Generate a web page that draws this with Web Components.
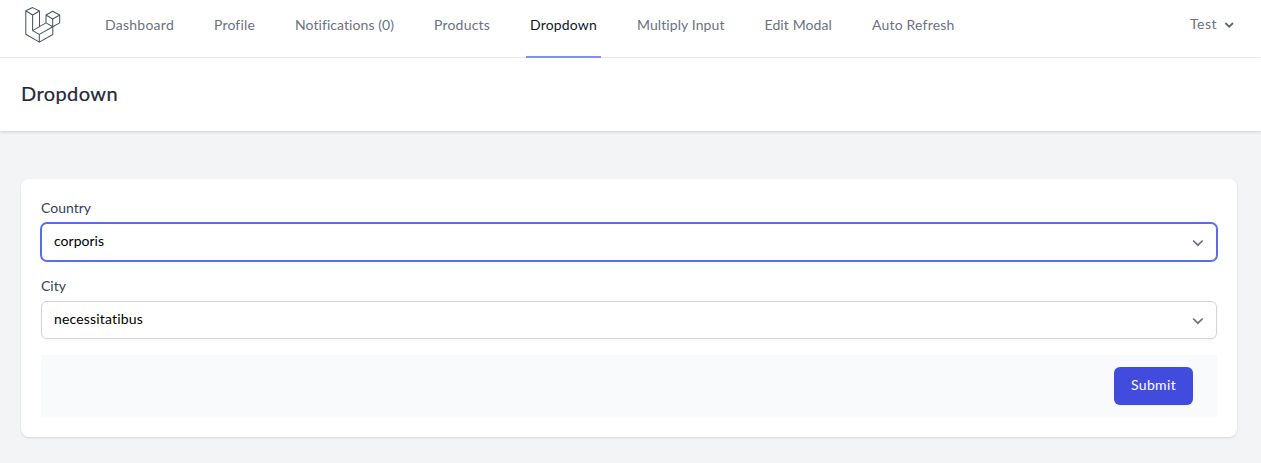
<!DOCTYPE html>
<html lang="en"><head><meta charset="utf-8"><title>Dropdown</title>
<style>html,body{margin:0;height:100%}body{background:#f3f4f6;font:14px/20px Lato,"Open Sans",sans-serif;overflow:hidden}</style></head>
<body><app-page></app-page>
<script>
const define=(name,html,setup)=>customElements.define(name,class extends HTMLElement{
  constructor(){super();this.attachShadow({mode:'open'}).innerHTML=html}
  connectedCallback(){if(setup)setup(this,this.shadowRoot)}
});
// A line of text whose tracking is adjusted to fill the width in "w".
define('fit-text','<style>:host{display:block;white-space:nowrap;font-kerning:normal;font-variant-ligatures:none}span{display:inline-block}</style><span></span>',(h,r)=>{
  const s=r.querySelector('span');s.textContent=h.getAttribute('text');
  const w=+h.getAttribute('w');h.style.width=w+'px';
  s.style.letterSpacing=((w-s.getBoundingClientRect().width)/s.textContent.length)+'px';
});
define('app-logo',`<style>:host{display:block;width:36px;height:37px}svg{display:block}</style>
<svg width="36" height="37" viewBox="25 7 36 37" fill="none" stroke="#4b5563" stroke-width="1.05" stroke-linejoin="round" stroke-linecap="round"><path d="M25.8 10.7 32.6 7.6 39.5 11 32.6 15ZM25.8 10.7V34.3L39.3 42.1 52.8 34.5V26.7L39.3 34.4 32.6 30.6V15M39.5 11V26.6M39.3 34.4V42.1M32.6 30.6 46 22.9 52.8 26.7M46 15 52.7 11.3 59.7 15 52.7 19ZM46 15V22.9M52.7 19V26.7M59.7 15V22.9L52.8 26.7"/></svg>`);
define('nav-link',`<style>:host{display:block;box-sizing:border-box;height:58px;padding:15px 4px 0;color:#6b7280;border-bottom:2px solid transparent}:host([active]){color:#111827;border-color:#7f8ff4}</style><slot></slot>`);
define('user-menu',`<style>:host{display:flex;align-items:center;gap:7px;height:20px;color:#6b7280;margin-top:14px}svg{display:block;margin-top:1px}</style><slot></slot>
<svg width="10" height="8" viewBox="0 0 10 8" fill="none" stroke="#5f6774" stroke-width="1.8"><path d="m1.4 2 3.8 3.7L9 2"/></svg>`);
define('app-nav',`<style>:host{display:flex;box-sizing:border-box;height:58px;background:#fff;border-bottom:1px solid #edeef0;padding:0 27px 0 25px;align-items:flex-start}app-logo{margin-top:7px}nav{display:flex;gap:32px;margin-left:40px}user-menu{margin-left:auto}</style>
<app-logo></app-logo><nav>
<nav-link><fit-text text="Dashboard" w="69"></fit-text></nav-link>
<nav-link><fit-text text="Profile" w="41"></fit-text></nav-link>
<nav-link><fit-text text="Notifications (0)" w="99"></fit-text></nav-link>
<nav-link><fit-text text="Products" w="56"></fit-text></nav-link>
<nav-link active><fit-text text="Dropdown" w="67"></fit-text></nav-link>
<nav-link><fit-text text="Multiply Input" w="87.5"></fit-text></nav-link>
<nav-link><fit-text text="Edit Modal" w="67.5"></fit-text></nav-link>
<nav-link><fit-text text="Auto Refresh" w="82.5"></fit-text></nav-link></nav>
<user-menu><fit-text text="Test" w="27"></fit-text></user-menu>`);
define('page-header',`<style>:host{display:block;box-sizing:border-box;height:73px;padding:21px 21px 24px;background:#fff;box-shadow:0 1px 3px rgba(0,0,0,.1),0 1px 2px rgba(0,0,0,.06);color:#1f2937;font-size:20px;line-height:28px;-webkit-text-stroke:.2px #1f2937}</style><slot></slot>`);
define('select-field',`<style>:host{display:block;height:78px;color:#374151}.box{box-sizing:border-box;height:38px;margin-top:5px;border:1px solid #d1d5db;border-radius:6px;background:#fff;box-shadow:0 1px 2px rgba(0,0,0,.05);padding:0 12.5px 0 12px;display:flex;align-items:center;justify-content:space-between;color:#000}:host([focused]) .box{border-color:#5b6ae6;box-shadow:0 0 0 1px #5b6ae6}svg{display:block;margin-top:1px}.value{margin-top:-2px}</style>
<slot name="label"></slot><div class="box"><div class="value"><slot></slot></div><svg width="12" height="8" viewBox="0 0 12 8" fill="none" stroke="#6b7280" stroke-width="1.7"><path d="m1.1 1.5 4.8 4.7 4.8-4.7"/></svg></div>`);
define('submit-button',`<style>:host{display:block}button{display:flex;box-sizing:border-box;width:79px;height:38px;padding:0 0 2px 17px;align-items:center;border:0;border-radius:6px;background:#414cdf;color:#fff;font:inherit;box-shadow:0 1px 2px rgba(0,0,0,.05)}</style><button><slot></slot></button>`);
define('form-card',`<style>:host{display:block;box-sizing:border-box;height:258px;margin:48px 24px 0 21px;padding:19px 20px 20px;border-radius:8px;background:#fff;box-shadow:0 1px 2px rgba(0,0,0,.13)}footer{box-sizing:border-box;height:62px;margin-top:1px;padding:12px 24px;background:#f9fafb;display:flex;justify-content:flex-end}</style>
<select-field focused><fit-text slot="label" text="Country" w="50"></fit-text><fit-text text="corporis" w="50"></fit-text></select-field>
<select-field><fit-text slot="label" text="City" w="25"></fit-text><fit-text text="necessitatibus" w="89"></fit-text></select-field>
<footer><submit-button><fit-text text="Submit" w="45"></fit-text></submit-button></footer>`);
define('app-page',`<style>:host{display:block}</style><app-nav></app-nav><page-header><fit-text text="Dropdown" w="97"></fit-text></page-header><form-card></form-card>`);
</script></body></html>
